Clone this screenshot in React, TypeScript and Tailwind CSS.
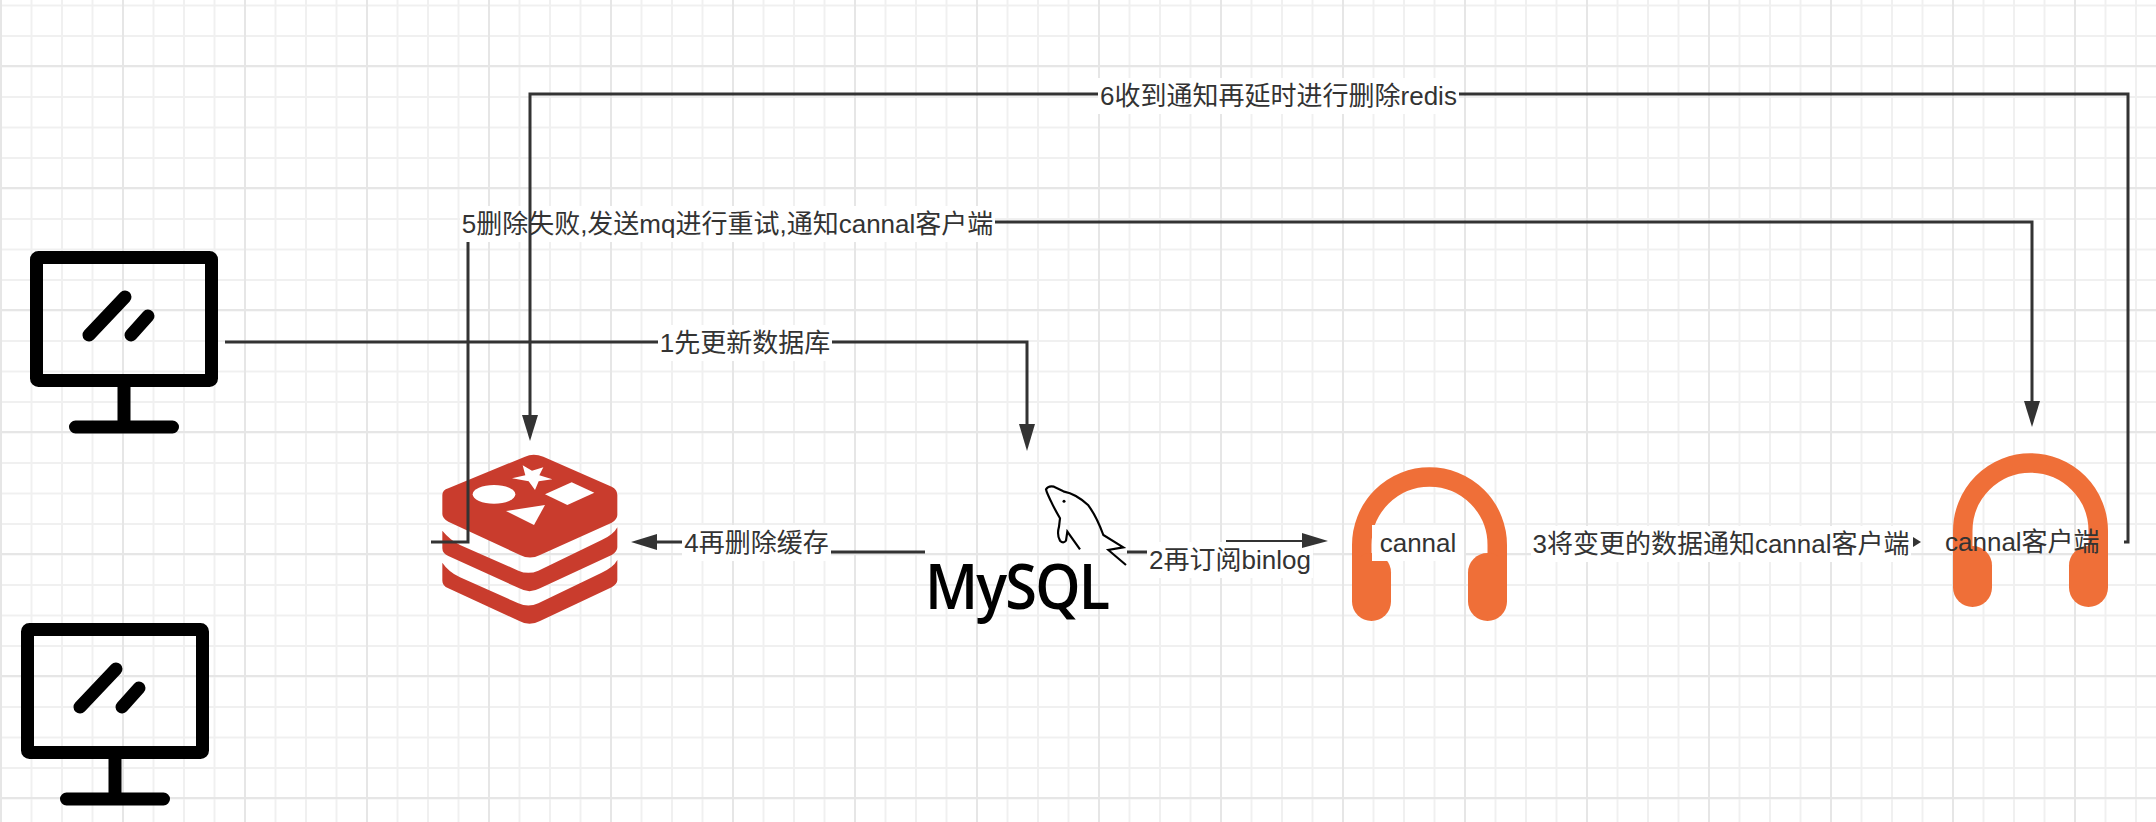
const FONT = "font-['Liberation_Sans','Noto_Sans_CJK_SC',sans-serif]";

function Label({ x, y, w, text, bg = true }: { x: string; y: string; w: string; text: string; bg?: boolean }) {
  return (
    <div
      className={`absolute ${x} ${y} ${w} ${bg ? "bg-white" : ""} ${FONT} h-[36px] whitespace-nowrap text-center text-[26px] leading-[36px] text-[#333333]`}
    >
      {text}
    </div>
  );
}

function Monitor({ className }: { className: string }) {
  return (
    <svg className={className} width="188" height="183" viewBox="0 0 188 183" fill="none" stroke="#000" strokeWidth="13">
      <rect x="6.5" y="6.5" width="175" height="123" rx="2" strokeLinejoin="round" />
      <path d="M94 136V176M45.5 176H142.5" strokeLinecap="round" />
      <path d="M59 84L95 46M101 84L118 65" strokeLinecap="round" />
    </svg>
  );
}

function Headphones({ className, cupY }: { className: string; cupY: number }) {
  return (
    <svg className={className} viewBox="0 0 155 154" fill="none">
      <path d="M9.75 125V78A67.75 68 0 0 1 145.25 78V125" stroke="#ef6f38" strokeWidth="19.5" />
      <rect x="0" y={cupY} width="39" height={154 - cupY} rx="19.5" fill="#ef6f38" />
      <rect x="116" y={cupY} width="39" height={154 - cupY} rx="19.5" fill="#ef6f38" />
    </svg>
  );
}

function Redis() {
  return (
    <svg className="absolute left-[430px] top-[440px]" width="200" height="200" viewBox="0 0 600 600">
      <g fill="#c93c2d">
        <path d="M285 50Q310 38 340 50L545 140Q562 148 562 165V225Q562 238 545 248L330 345Q300 360 270 345L55 245Q37 235 37 222V165Q37 150 55 145Z" />
        <path d="M37 272Q60 300 90 315L265 392Q295 405 325 392L515 300Q550 285 562 262V322Q562 335 545 345L330 445Q298 462 268 445L55 348Q37 340 37 325Z" />
        <path d="M37 368Q55 395 90 412L265 490Q295 503 325 490L515 398Q550 382 562 360V420Q562 432 545 442L330 543Q298 560 268 543L55 445Q37 437 37 422Z" />
      </g>
      <g fill="#fff">
        <path d="M278 76L306 92L340 82L328 106L367 118L326 124L315 150L296 124L246 115L286 106Z" />
        <ellipse cx="192" cy="163" rx="64" ry="28" />
        <path d="M345 163L425 127L493 158L412 195Z" />
        <path d="M228 213L345 195L312 255Z" />
      </g>
    </svg>
  );
}

function Dolphin() {
  return (
    <svg className="absolute left-[920px] top-[470px]" width="220" height="160" viewBox="0 0 660 480" fill="none">
      <path
        d="M480 238L442 185L438 212Q430 222 420 212Q410 195 417 170L420 145Q400 110 392 92Q380 68 378 58Q385 46 402 50L430 64Q470 72 505 106Q530 140 550 195L610 232L565 240L618 285"
        stroke="#000"
        strokeWidth="6.5"
        strokeLinejoin="miter"
      />
      <circle cx="432" cy="94" r="4.5" fill="#000" />
    </svg>
  );
}

export default function App() {
  return (
    <div className="relative h-[822px] w-[2156px] overflow-hidden bg-white [background-image:linear-gradient(to_right,#e6e6e6_2px,transparent_2px),linear-gradient(to_bottom,#e6e6e6_2px,transparent_2px),linear-gradient(to_right,#f0f0f0_2px,transparent_2px),linear-gradient(to_bottom,#f0f0f0_2px,transparent_2px)] [background-position:0_0,0_65px,0_0,0_4.5px] [background-size:122px_122px,122px_122px,30.5px_30.5px,30.5px_30.5px]">
      <Monitor className="absolute left-[30px] top-[251px]" />
      <Monitor className="absolute left-[21px] top-[623px]" />
      <Redis />
      <Dolphin />
      <div className="absolute left-[925px] top-[541px] origin-left scale-x-[0.9] font-['Open_Sans',sans-serif] text-[64px] font-semibold leading-[87px] tracking-[-2px] text-black">
        MySQL
      </div>
      <Headphones className="absolute left-[1352px] top-[467px] h-[154px] w-[155px]" cupY={86} />
      <Headphones className="absolute left-[1953px] top-[453px] h-[154px] w-[155px]" cupY={93} />

      <Label x="left-[1098px]" y="top-[78px]" w="w-[361px]" text="6收到通知再延时进行删除redis" />
      <Label x="left-[460px]" y="top-[206px]" w="w-[535px]" text="5删除失败,发送mq进行重试,通知cannal客户端" />
      <Label x="left-[658px]" y="top-[325px]" w="w-[174px]" text="1先更新数据库" />
      <Label x="left-[682px]" y="top-[525px]" w="w-[149px]" text="4再删除缓存" />
      <Label x="left-[1147px]" y="top-[542px]" w="w-[166px]" text="2再订阅binlog" />
      <Label x="left-[1372px]" y="top-[525px]" w="w-[92px]" text="cannal" />
      <Label x="left-[1531px]" y="top-[526px]" w="w-[380px]" text="3将变更的数据通知cannal客户端" />
      <Label x="left-[1945px]" y="top-[524px]" w="w-[154px]" text="cannal客户端" bg={false} />

      <svg className="absolute left-0 top-0" width="2156" height="822" viewBox="0 0 2156 822" fill="none">
        <g stroke="#333333" strokeWidth="3">
          <path d="M225 342H658M832 342H1027V425" />
          <path d="M530 415V94H1098M1459 94H2128V542H2124" />
          <path d="M468 242V542H431" />
          <path d="M995 222H2032V402" />
          <path d="M925 552H831M682 542H656" />
          <path d="M1127 552H1147" />
        </g>
        <path d="M1226 541H1303" stroke="#333333" strokeWidth="2" />
        <g fill="#333333">
          <path d="M1019 424H1035L1027 451Z" />
          <path d="M522 415H538L530 441Z" />
          <path d="M2024 401H2040L2032 427Z" />
          <path d="M657 534V550L631 542Z" />
          <path d="M1302 533V548L1328 541Z" />
          <path d="M1913 537V547L1921 542Z" />
        </g>
      </svg>
    </div>
  );
}
